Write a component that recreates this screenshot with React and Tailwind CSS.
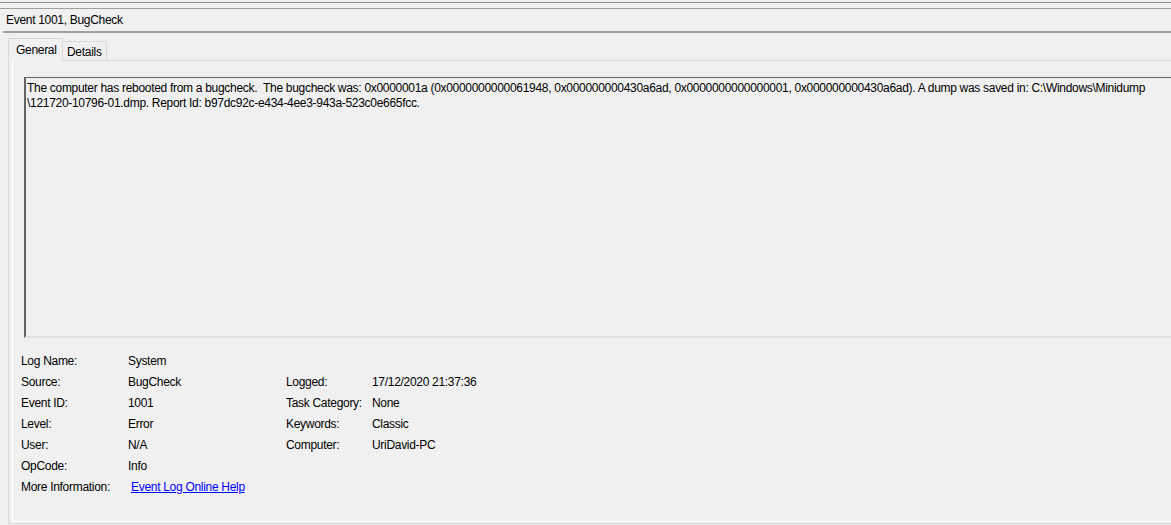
const rowsLeft = [
  ["Log Name:", "System"],
  ["Source:", "BugCheck"],
  ["Event ID:", "1001"],
  ["Level:", "Error"],
  ["User:", "N/A"],
  ["OpCode:", "Info"],
];

const rowsRight = [
  null,
  ["Logged:", "17/12/2020 21:37:36"],
  ["Task Category:", "None"],
  ["Keywords:", "Classic"],
  ["Computer:", "UriDavid-PC"],
  null,
];

function App() {
  return (
    <div className="w-[1171px] h-[525px] overflow-hidden bg-[#f0f0f0] text-[12px] tracking-[-0.3px] text-black font-['Segoe_UI','Liberation_Sans',sans-serif] flex flex-col">
      <div className="h-[2px] shrink-0" />
      <div className="h-[6px] shrink-0 border-t border-[#8c8c8c]" />
      <div className="h-[23px] shrink-0 border-t border-[#a0a0a0] px-[6px] flex items-center">
        Event 1001, BugCheck
      </div>
      <div className="ml-[3px] shrink-0 border-t-2 border-[#a0a0a0]" />

      <div className="flex items-end pl-[8px] pt-[5px] shrink-0">
        <div className="relative z-10 -mb-px h-[23px] w-[55px] border border-b-0 border-[#d9d9d9] bg-[#f0f0f0] pl-[7px] pt-[2px]">
          General
        </div>
        <div className="h-[19px] w-[44px] border border-l-0 border-b-0 border-[#d9d9d9] bg-[#f0f0f0] pl-[4px] pt-[1px]">
          Details
        </div>
      </div>

      <div className="ml-[8px] flex-1 border border-r-0 border-[#d9d9d9] mb-px flex flex-col">
        <div className="ml-[3px] flex-1 border-l border-b border-white mb-px flex flex-col">
          <div className="ml-[11px] mt-[16px] h-[261px] border-t border-l-2 border-b-2 border-t-[#646464] border-l-[#646464] border-b-[#e3e3e3] bg-[#f0f0f0] pl-[1px] pt-[3px] leading-[15px] whitespace-pre">
            {"The computer has rebooted from a bugcheck.  The bugcheck was: 0x0000001a (0x0000000000061948, 0x000000000430a6ad, 0x0000000000000001, 0x000000000430a6ad). A dump was saved in: C:\\Windows\\Minidump"}
            <br />
            {"\\121720-10796-01.dmp. Report Id: b97dc92c-e434-4ee3-943a-523c0e665fcc."}
          </div>

          <div className="mt-[12px] ml-[8px] grid grid-cols-[107px_158px_86px_1fr] auto-rows-[21px] items-center">
            {rowsLeft.map((left, i) => (
              <div key={i} className="contents">
                <div>{left[0]}</div>
                <div>{left[1]}</div>
                <div>{rowsRight[i] ? rowsRight[i][0] : ""}</div>
                <div>{rowsRight[i] ? rowsRight[i][1] : ""}</div>
              </div>
            ))}
            <div>More Information:</div>
            <div className="col-span-3 pl-[3px]">
              <a href="#" className="text-[#0000ff] underline">
                Event Log Online Help
              </a>
            </div>
          </div>
        </div>
      </div>
    </div>
  );
}

export default App;
